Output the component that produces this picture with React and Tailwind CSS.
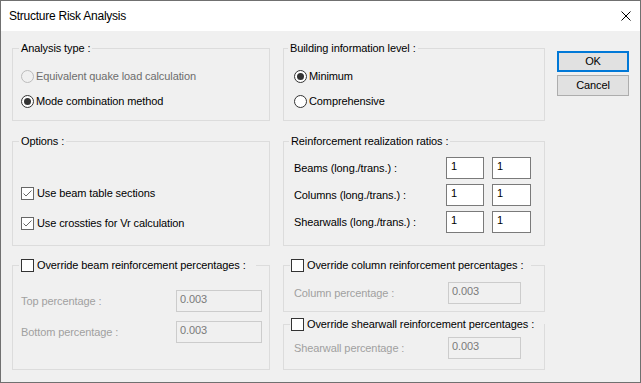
import React from 'react';

// Win32-style dialog: group boxes drawn with fieldset/legend
function Group({ legend, legendClass = 'ml-[6px] px-[2px]', className = '', children }) {
  return (
    <fieldset className={`border border-[#dcdcdc] ${className}`}>
      <legend className={`leading-[14px] whitespace-nowrap ${legendClass}`}>{legend}</legend>
      {children}
    </fieldset>
  );
}

function Radio({ checked, disabled, label }) {
  return (
    <div className="flex items-center h-[17px] gap-[2px]">
      <span
        className={`w-[13px] h-[13px] rounded-full border flex items-center justify-center ${
          disabled ? 'border-[#bcbcbc] bg-[#f0f0f0]' : 'border-[#333333] bg-white'
        }`}
      >
        {checked && <span className="w-[7px] h-[7px] rounded-full bg-[#333333]"></span>}
      </span>
      <span className={disabled ? 'text-[#6d6d6d]' : ''}>{label}</span>
    </div>
  );
}

function Check({ checked, label }) {
  return (
    <div className="flex items-center gap-[3px]">
      <span
        className={`w-[13px] h-[13px] shrink-0 border flex items-center justify-center bg-white ${
          checked ? 'border-[#666666]' : 'border-[#333333]'
        }`}
      >
        {checked && (
          <svg width="11" height="11" viewBox="0 0 11 11">
            <path d="M1.5 5.5 L4 8 L9.5 2.5" fill="none" stroke="#666666" strokeWidth="1" />
          </svg>
        )}
      </span>
      <span className="whitespace-nowrap">{label}</span>
    </div>
  );
}

function Field({ value, disabled, width }) {
  return (
    <div
      className={`h-[22px] border pt-[1px] leading-[14px] ${width} ${
        disabled ? 'border-[#cccccc] bg-[#f0f0f0] text-[#7a7a7a] pl-[3px]' : 'border-[#7a7a7a] bg-white pl-[4px]'
      }`}
    >
      {value}
    </div>
  );
}

export default function App() {
  const ratios = ['Beams (long./trans.) :', 'Columns (long./trans.) :', 'Shearwalls (long./trans.) :'];

  return (
    <div className="w-[641px] h-[383px] border border-[#707070] bg-[#f0f0f0] flex flex-col font-['Liberation_Sans',Arial,sans-serif] text-[11px] tracking-[-0.1px] text-black">
      {/* Title bar */}
      <div className="h-[30px] bg-white flex items-center justify-between pl-[8px] pr-[9px]">
        <span className="text-[12px] tracking-[-0.25px]">Structure Risk Analysis</span>
        <svg width="10" height="10" viewBox="0 0 10 10">
          <path d="M0.5 0.5 L9.5 9.5 M9.5 0.5 L0.5 9.5" stroke="#000" strokeWidth="1" />
        </svg>
      </div>

      <div className="flex-1 flex pt-[10px] pl-[11px]">
        {/* Left column */}
        <div className="w-[258px] flex flex-col gap-[13px]">
          <Group legend="Analysis type :" className="h-[80px]">
            <div className="flex flex-col gap-[8px] pt-[13px] pl-[8px]">
              <Radio disabled label="Equivalent quake load calculation" />
              <Radio checked label="Mode combination method" />
            </div>
          </Group>

          <Group legend="Options :" className="h-[112px]">
            <div className="flex flex-col gap-[13px] pt-[37px] pl-[8px]">
              <div className="h-[17px] flex items-center">
                <Check checked label="Use beam table sections" />
              </div>
              <div className="h-[17px] flex items-center">
                <Check checked label="Use crossties for Vr calculation" />
              </div>
            </div>
          </Group>

          <Group
            legend={<Check label="Override beam reinforcement percentages :" />}
            legendClass="ml-[6px] pl-[2px] pr-[10px]"
            className="h-[112px] mt-[-1px]"
          >
            <div className="flex flex-col gap-[9px] pt-[18px] pl-[8px]">
              <div className="flex items-center">
                <span className="w-[155px] text-[#a0a0a0]">Top percentage :</span>
                <Field disabled value="0.003" width="w-[86px]" />
              </div>
              <div className="flex items-center">
                <span className="w-[155px] text-[#a0a0a0]">Bottom percentage :</span>
                <Field disabled value="0.003" width="w-[86px]" />
              </div>
            </div>
          </Group>
        </div>

        {/* Middle column */}
        <div className="w-[262px] ml-[13px] flex flex-col gap-[13px]">
          <Group legend="Building information level :" legendClass="ml-[4px] px-[2px]" className="h-[80px]">
            <div className="flex flex-col gap-[8px] pt-[13px] pl-[10px]">
              <Radio checked label="Minimum" />
              <Radio label="Comprehensive" />
            </div>
          </Group>

          <Group legend="Reinforcement realization ratios :" legendClass="ml-[5px] px-[2px]" className="h-[112px]">
            <div className="flex flex-col gap-[5px] pt-[9px] pl-[10px]">
              {ratios.map((r) => (
                <div key={r} className="flex items-center">
                  <span className="w-[152px]">{r}</span>
                  <Field value="1" width="w-[38px]" />
                  <div className="w-[8px]"></div>
                  <Field value="1" width="w-[39px]" />
                </div>
              ))}
            </div>
          </Group>

          <div className="flex flex-col gap-[5px] mt-[-1px]">
            <Group
              legend={<Check label="Override column reinforcement percentages :" />}
              legendClass="ml-[6px] pl-[1px] pr-[8px]"
              className="h-[54px]"
            >
              <div className="flex items-center pt-[10px] pl-[10px]">
                <span className="w-[154px] text-[#a0a0a0]">Column percentage :</span>
                <Field disabled value="0.003" width="w-[73px]" />
              </div>
            </Group>
            <Group
              legend={<Check label="Override shearwall reinforcement percentages :" />}
              legendClass="ml-[6px] pl-[1px] pr-[10px]"
              className="h-[53px]"
            >
              <div className="flex items-center pt-[6px] pl-[10px]">
                <span className="w-[154px] text-[#a0a0a0]">Shearwall percentage :</span>
                <Field disabled value="0.003" width="w-[73px]" />
              </div>
            </Group>
          </div>
        </div>

        {/* Buttons */}
        <div className="w-[72px] ml-[12px] mt-[10px] flex flex-col gap-[3px]">
          <button className="h-[21px] border-2 border-[#0078d7] bg-[#e1e1e1] flex items-center justify-center">OK</button>
          <button className="h-[21px] border border-[#adadad] bg-[#e1e1e1] flex items-center justify-center">Cancel</button>
        </div>
      </div>
    </div>
  );
}
